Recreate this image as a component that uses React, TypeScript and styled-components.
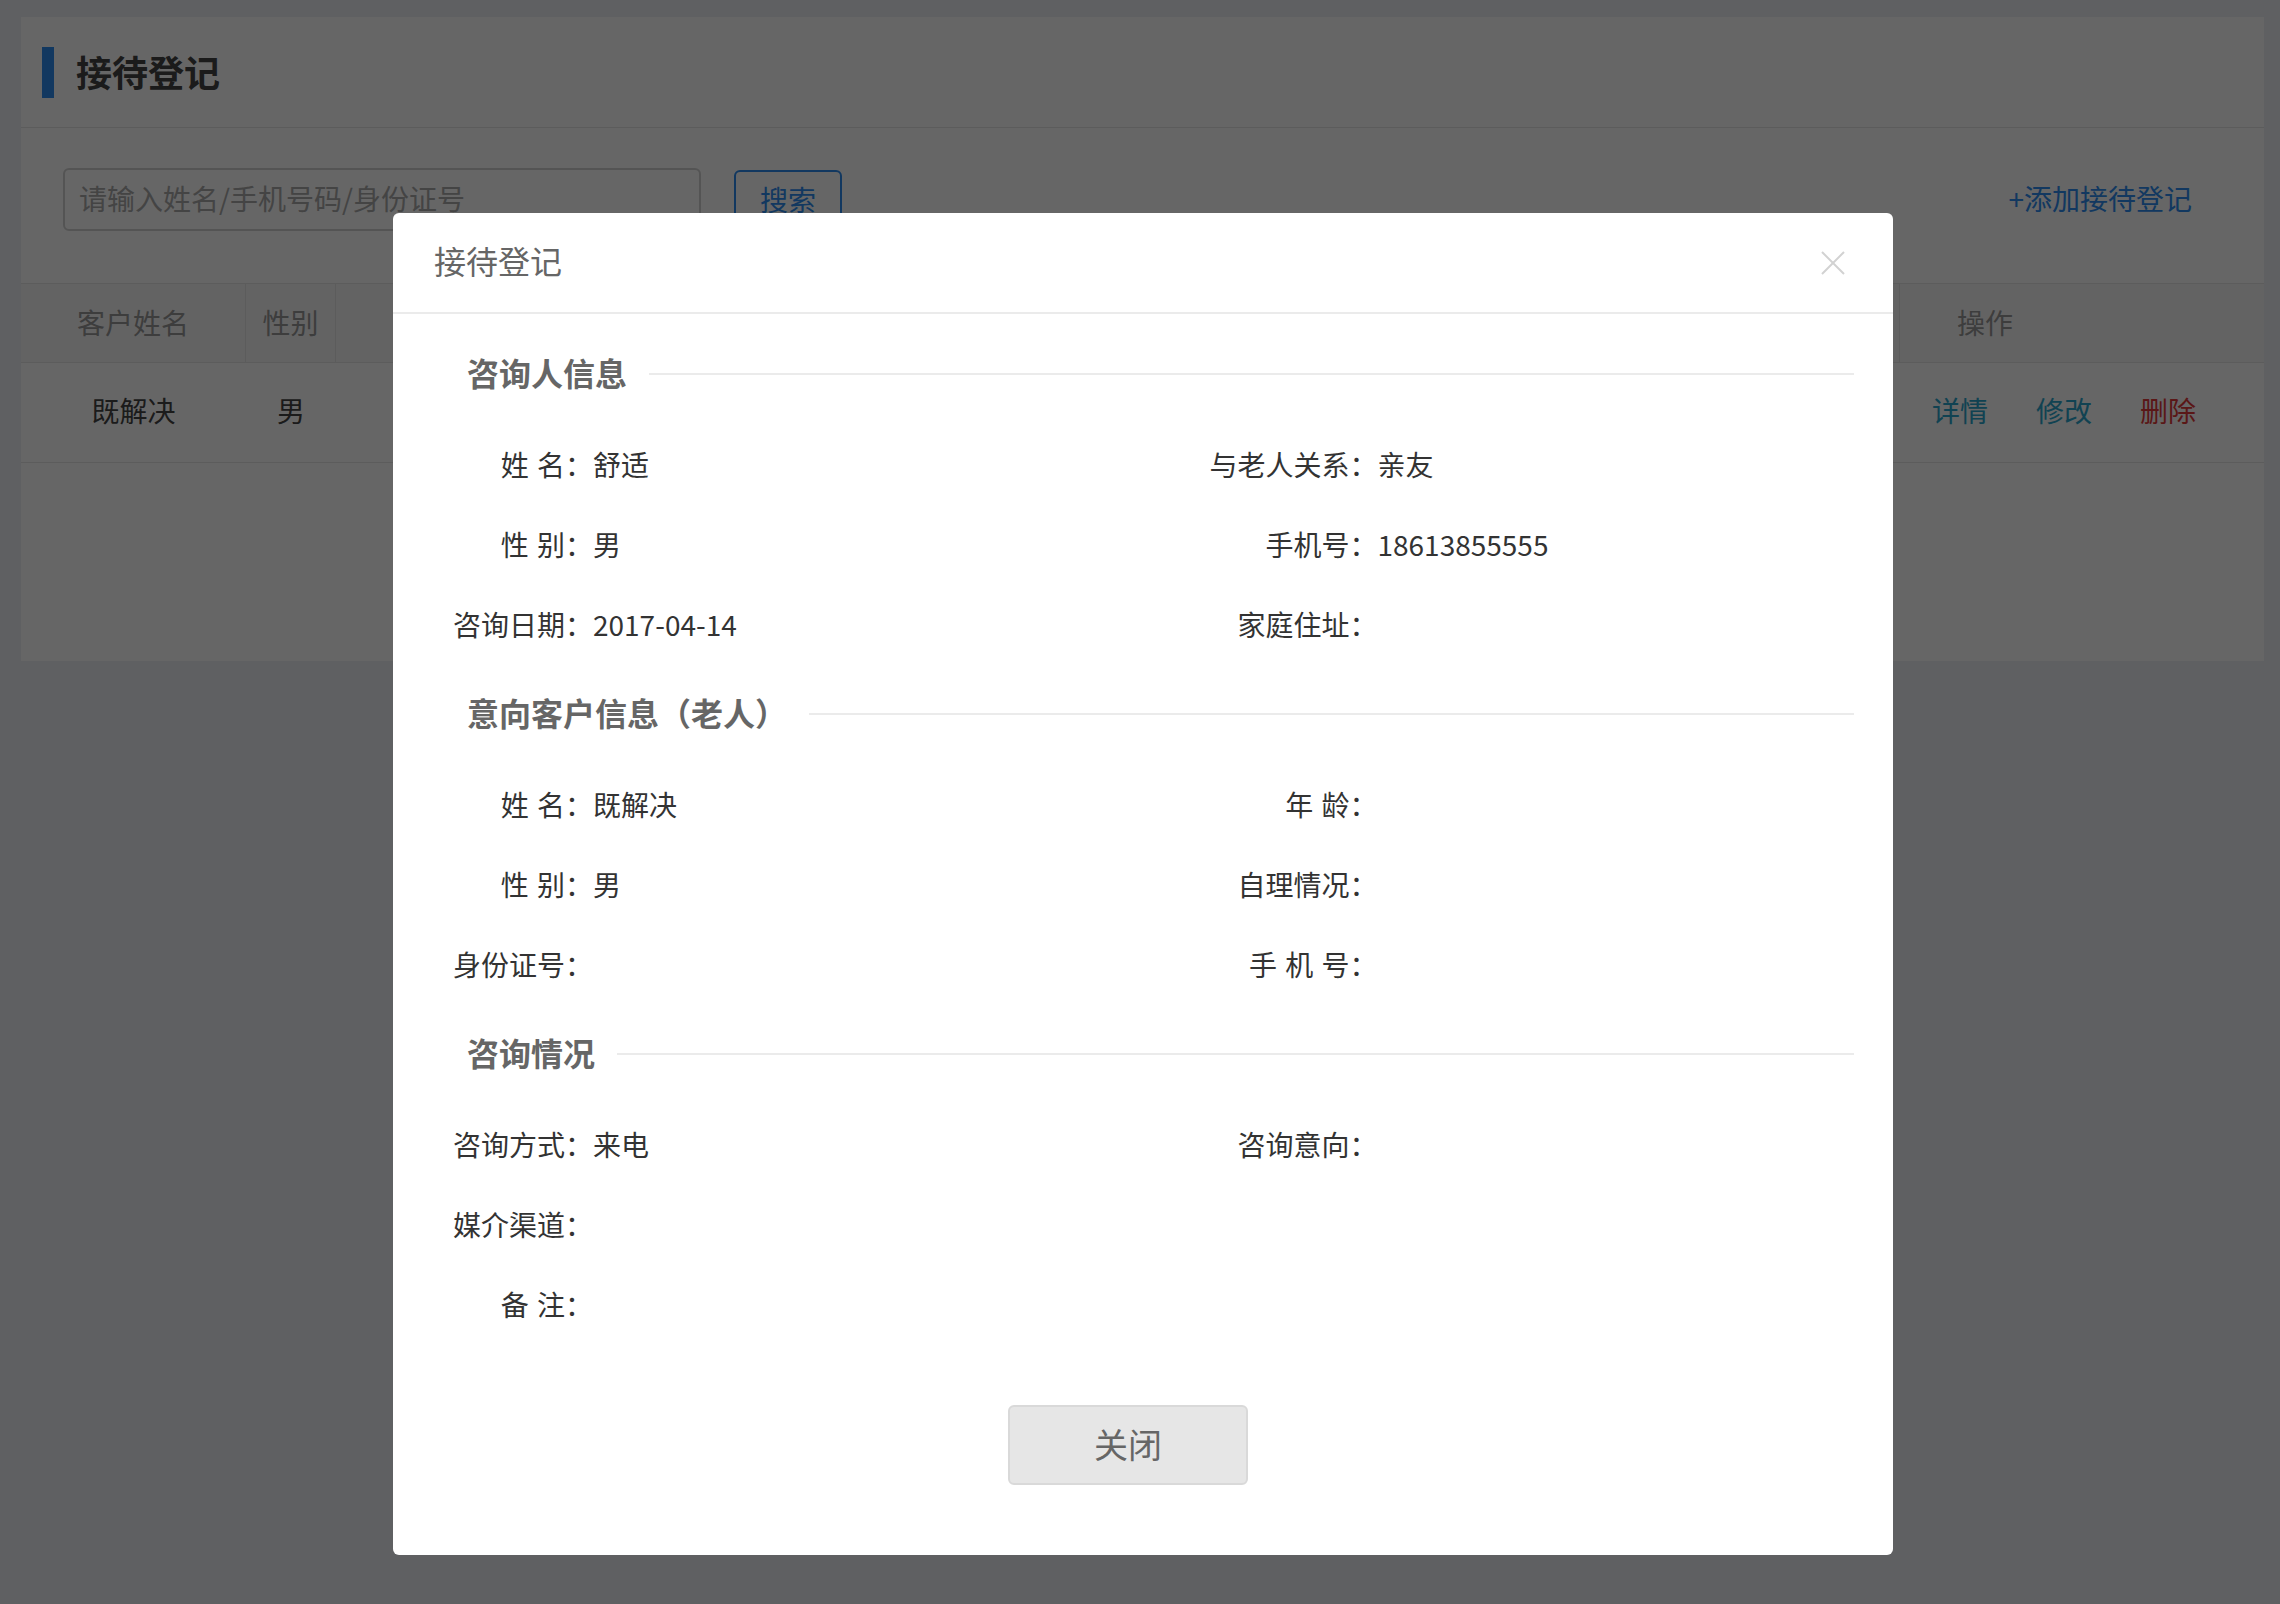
import React from "react";
import styled, { createGlobalStyle } from "styled-components";

const BLUE = "#2d8cf0";

const GlobalStyle = createGlobalStyle`
  html, body {
    margin: 0;
    padding: 0;
  }
  body {
    background: #edf0f5;
    font-family: "Noto Sans CJK SC", "Noto Sans", sans-serif;
    color: #444;
  }
  * {
    box-sizing: border-box;
  }
`;

type Customer = {
  name: string;
  gender: string;
  phone: string;
  date: string;
  method: string;
  staff: string;
};

type Field = {
  label: string;
  value?: string;
  side: "left" | "right";
};

type Section = {
  title: string;
  fields: Field[];
};

const customers: Customer[] = [
  { name: "既解决", gender: "男", phone: "", date: "2017-04-14", method: "来电", staff: "" },
];

const sections: Section[] = [
  {
    title: "咨询人信息",
    fields: [
      { label: "姓 名：", value: "舒适", side: "left" },
      { label: "与老人关系：", value: "亲友", side: "right" },
      { label: "性 别：", value: "男", side: "left" },
      { label: "手机号：", value: "18613855555", side: "right" },
      { label: "咨询日期：", value: "2017-04-14", side: "left" },
      { label: "家庭住址：", side: "right" },
    ],
  },
  {
    title: "意向客户信息（老人）",
    fields: [
      { label: "姓 名：", value: "既解决", side: "left" },
      { label: "年 龄：", side: "right" },
      { label: "性 别：", value: "男", side: "left" },
      { label: "自理情况：", side: "right" },
      { label: "身份证号：", side: "left" },
      { label: "手 机 号：", side: "right" },
    ],
  },
  {
    title: "咨询情况",
    fields: [
      { label: "咨询方式：", value: "来电", side: "left" },
      { label: "咨询意向：", side: "right" },
      { label: "媒介渠道：", side: "left" },
      { label: "", side: "right" },
      { label: "备 注：", side: "left" },
    ],
  },
];

export default function App() {
  return (
    <>
      <GlobalStyle />
      <Page>
        <Panel>
          <PanelHeader>
            <TitleBar />
            <PanelTitle>接待登记</PanelTitle>
          </PanelHeader>

          <SearchBar>
            <SearchInput placeholder="请输入姓名/手机号码/身份证号" />
            <SearchButton>搜索</SearchButton>
            <AddLink>+添加接待登记</AddLink>
          </SearchBar>

          <TableHead>
            <HeadCell>客户姓名</HeadCell>
            <HeadCell>性别</HeadCell>
            <HeadCell>联系电话</HeadCell>
            <HeadCell>咨询日期</HeadCell>
            <HeadCell>咨询方式</HeadCell>
            <HeadCell>接待人</HeadCell>
            <HeadCell $last>操作</HeadCell>
          </TableHead>
          {customers.map((c) => (
            <TableRow key={c.name}>
              <Cell>{c.name}</Cell>
              <Cell>{c.gender}</Cell>
              <Cell>{c.phone}</Cell>
              <Cell>{c.date}</Cell>
              <Cell>{c.method}</Cell>
              <Cell>{c.staff}</Cell>
              <ActionCell>
                <ActionLink>详情</ActionLink>
                <ActionLink>修改</ActionLink>
                <ActionLink $danger>删除</ActionLink>
              </ActionCell>
            </TableRow>
          ))}
          <TableFoot />
        </Panel>
      </Page>

      <Backdrop>
        <Modal>
          <ModalHeader>
            <ModalTitle>接待登记</ModalTitle>
            <CloseButton aria-label="关闭">
              <svg width="24" height="24" viewBox="0 0 24 24">
                <path d="M1 1 L23 23 M23 1 L1 23" stroke="#d2d2d2" strokeWidth="2" fill="none" />
              </svg>
            </CloseButton>
          </ModalHeader>

          <ModalBody>
            {sections.map((s, i) => (
              <SectionBlock key={s.title} $first={i === 0}>
                <SectionHeading>
                  <SectionTitle>{s.title}</SectionTitle>
                  <SectionRule />
                </SectionHeading>
                <FieldGrid>
                  {s.fields.map((f, j) => (
                    <FieldRow key={j}>
                      <FieldLabel $width={f.side === "left" ? 140 : 224}>{f.label}</FieldLabel>
                      <FieldValue>{f.value}</FieldValue>
                    </FieldRow>
                  ))}
                </FieldGrid>
              </SectionBlock>
            ))}
          </ModalBody>

          <ModalFooter>
            <CloseAction>关闭</CloseAction>
          </ModalFooter>
        </Modal>
      </Backdrop>
    </>
  );
}

const Page = styled.div`
  min-height: 1604px;
  padding: 17px 16px 0 21px;
`;

const Panel = styled.section`
  background: #fff;
`;

const PanelHeader = styled.header`
  display: flex;
  align-items: center;
  height: 111px;
  padding-left: 21px;
  border-bottom: 1px solid #e6e6e6;
`;

const TitleBar = styled.span`
  width: 12px;
  height: 51px;
  background: ${BLUE};
  margin-right: 22px;
`;

const PanelTitle = styled.h1`
  margin: 0 0 3px;
  font-size: 36px;
  font-weight: 700;
  color: #444;
`;

const SearchBar = styled.div`
  display: flex;
  align-items: center;
  padding: 40px 72px 52px 42px;
  border-bottom: 1px solid #e6e6e6;
`;

const SearchInput = styled.input`
  width: 638px;
  height: 63px;
  padding: 0 14px 3px;
  border: 2px solid #d2d2d2;
  border-radius: 6px;
  font-family: inherit;
  font-size: 28px;
  color: #444;
  outline: none;

  &::placeholder {
    color: #aaa;
  }
`;

const SearchButton = styled.button`
  width: 108px;
  height: 60px;
  margin-left: 33px;
  padding-bottom: 3px;
  border: 2px solid ${BLUE};
  border-radius: 6px;
  background: #fff;
  color: ${BLUE};
  font-family: inherit;
  font-size: 28px;
`;

const AddLink = styled.a`
  margin-left: auto;
  margin-bottom: 3px;
  color: ${BLUE};
  font-size: 28px;
  cursor: pointer;
`;

const tableColumns = "225px 90px 1fr 1fr 1fr 1fr 364px";

const TableHead = styled.div`
  display: grid;
  grid-template-columns: ${tableColumns};
  height: 79px;
  background: #f8f8f8;
  border-bottom: 1px solid #e6e6e6;
`;

const HeadCell = styled.div<{ $last?: boolean }>`
  display: flex;
  align-items: center;
  justify-content: ${(p) => (p.$last ? "flex-start" : "center")};
  padding-left: ${(p) => (p.$last ? "57px" : "0")};
  padding-bottom: 3px;
  border-right: ${(p) => (p.$last ? "none" : "1px solid #e6e6e6")};
  font-size: 28px;
  color: #999;
`;

const TableRow = styled.div`
  display: grid;
  grid-template-columns: ${tableColumns};
  height: 100px;
  border-bottom: 1px solid #e6e6e6;
`;

const Cell = styled.div`
  display: flex;
  align-items: center;
  justify-content: center;
  padding-bottom: 5px;
  font-size: 28px;
  color: #444;
`;

const ActionCell = styled.div`
  display: flex;
  align-items: center;
  gap: 48px;
  padding: 0 0 5px 32px;
`;

const ActionLink = styled.a<{ $danger?: boolean }>`
  font-size: 28px;
  color: ${(p) => (p.$danger ? "#e03a3a" : "#2ba6cc")};
  cursor: pointer;
`;

const TableFoot = styled.div`
  height: 198px;
`;

const Backdrop = styled.div`
  position: fixed;
  inset: 0;
  display: flex;
  justify-content: center;
  align-items: flex-start;
  padding: 213px 0 0 6px;
  background: rgba(0, 0, 0, 0.6);
`;

const Modal = styled.div`
  width: 1500px;
  background: #fff;
  border-radius: 6px;
`;

const ModalHeader = styled.div`
  display: flex;
  align-items: center;
  justify-content: space-between;
  height: 101px;
  padding: 0 48px 0 41px;
  border-bottom: 2px solid #ebebeb;
`;

const ModalTitle = styled.h2`
  margin: 0 0 5px;
  font-size: 32px;
  font-weight: 400;
  color: #666;
`;

const CloseButton = styled.button`
  display: flex;
  padding: 0;
  border: none;
  background: none;
  cursor: pointer;
`;

const ModalBody = styled.div`
  padding: 30px 39px 0 60px;
`;

const SectionBlock = styled.div<{ $first?: boolean }>`
  margin-top: ${(p) => (p.$first ? "0" : "20px")};
`;

const SectionHeading = styled.div`
  display: flex;
  align-items: center;
  height: 60px;
  margin-bottom: 20px;
  padding-left: 14px;
`;

const SectionTitle = styled.h3`
  margin: 0 0 5px;
  font-size: 32px;
  font-weight: 700;
  color: #666;
  white-space: nowrap;
`;

const SectionRule = styled.span`
  flex: 1;
  height: 2px;
  margin-left: 22px;
  background: #ebebeb;
`;

const FieldGrid = styled.div`
  display: grid;
  grid-template-columns: 1fr 1fr;
  grid-auto-rows: 80px;
`;

const FieldRow = styled.div`
  display: flex;
  align-items: center;
  font-size: 28px;
  line-height: 80px;
  color: #333;
`;

const FieldLabel = styled.span<{ $width: number }>`
  flex-shrink: 0;
  width: ${(p) => p.$width}px;
  text-align: right;
  white-space: pre;
  word-spacing: 2px;
`;

const FieldValue = styled.span`
  white-space: nowrap;
`;

const ModalFooter = styled.div`
  display: flex;
  justify-content: center;
  padding: 61px 30px 70px 0;
`;

const CloseAction = styled.button`
  width: 240px;
  height: 80px;
  padding-bottom: 4px;
  border: 2px solid #d9d9d9;
  border-radius: 6px;
  background: #e6e6e6;
  color: #666;
  font-family: inherit;
  font-size: 34px;
  cursor: pointer;
`;
